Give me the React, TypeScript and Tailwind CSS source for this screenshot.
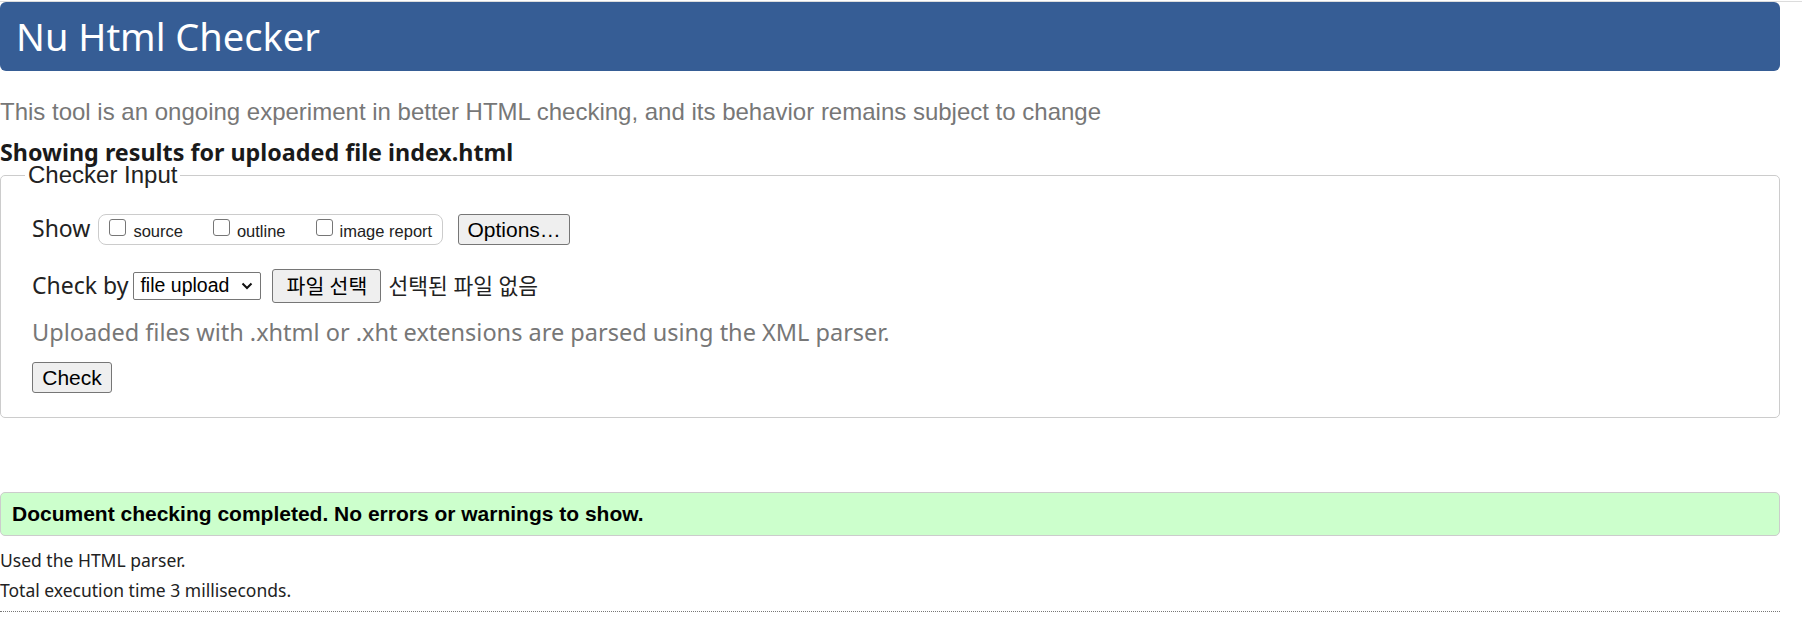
import React from "react";

const ARIAL = "font-['Liberation_Sans',Arial,sans-serif]";
const MALGUN = "font-['Noto_Sans','Noto_Sans_CJK_KR',sans-serif]";

function Box({ label, last }: { label: string; last?: boolean }) {
  return (
    <span className={`inline-flex items-center ${last ? "" : "mr-[30px]"}`}>
      <span className="inline-block w-[17px] h-[17px] border border-[#767676] rounded-[3px] bg-white mr-[7px] -translate-y-[2px]" />
      <span className={`${ARIAL} text-[16.5px] leading-none text-[#222] translate-y-[2px]`}>{label}</span>
    </span>
  );
}

export default function App() {
  return (
    <div className="w-full bg-white text-[#222] min-h-[624px]">
      <div className="pt-px">
        <div className="h-px bg-[#dcdcdc]" />
      </div>
      <div className="mr-[22px]">
        <div className="h-[69px] bg-[#365d95] rounded-[6px] flex items-center pl-[16px]">
          <span className={`${MALGUN} text-white text-[38px] leading-none -translate-y-[1px]`}>Nu Html Checker</span>
        </div>

        <p className={`${ARIAL} text-[#777] text-[24px] leading-none mt-[29px]`}>
          This tool is an ongoing experiment in better HTML checking, and its behavior remains subject to change
        </p>
        <h2 className={`${MALGUN} font-bold text-[23.3px] leading-[20px] mt-[18px] text-[#1a1a1a]`}>
          Showing results for uploaded file index.html
        </h2>

        <fieldset className="border border-[#cccccc] rounded-[5px] pb-[24px] mt-[4px]">
          <legend className={`${ARIAL} ml-[24px] px-[3px] text-[24px] leading-[18px] text-[#222]`}>Checker Input</legend>
          <div className="pl-[31px] pt-[29px]">
            <div className="flex items-center h-[32px]">
              <span className={`${MALGUN} text-[23px] leading-none mr-[8px] -translate-y-[1px]`}>Show</span>
              <span className="inline-flex items-center h-[31px] pl-[10px] pr-[10px] border border-[#cccccc] rounded-[8px]">
                <Box label="source" />
                <Box label="outline" />
                <Box label="image report" last />
              </span>
              <button className={`${ARIAL} ml-[15px] h-[31px] w-[112px] text-[21px] leading-none bg-[#efefef] border border-[#767676] rounded-[3px] text-black`}>
                Options…
              </button>
            </div>

            <div className="flex items-center mt-[24px] h-[34px]">
              <span className={`${MALGUN} text-[23px] leading-none mr-[5px] -translate-y-[1px]`}>Check by</span>
              <span className={`${ARIAL} inline-flex items-center justify-between w-[128px] h-[28px] pl-[6px] pr-[7px] border border-[#767676] rounded-[2px] text-[19.5px] leading-none text-black`}>
                file upload
                <svg width="12" height="8" viewBox="0 0 12 8" fill="none" stroke="#111" strokeWidth="2">
                  <path d="M1.5 1.5 L6 6 L10.5 1.5" />
                </svg>
              </span>
              <button className={`${MALGUN} ml-[11px] h-[34px] w-[109px] text-[20.5px] leading-none bg-[#efefef] border border-[#767676] rounded-[3px] text-black`}>
                파일 선택
              </button>
              <span className={`${MALGUN} ml-[7px] text-[21.5px] leading-none`}>선택된 파일 없음</span>
            </div>

            <p className={`${MALGUN} text-[#777] text-[23.5px] leading-none mt-[18px]`}>
              Uploaded files with .xhtml or .xht extensions are parsed using the XML parser.
            </p>

            <button className={`${ARIAL} mt-[17px] h-[31px] w-[80px] text-[21px] leading-none bg-[#efefef] border border-[#767676] rounded-[3px] text-black`}>
              Check
            </button>
          </div>
        </fieldset>

        <div className="mt-[74px] h-[44px] bg-[#ccffcc] border border-[#cccccc] rounded-[5px] flex items-center pl-[11px]">
          <span className={`${ARIAL} font-bold text-[21px] leading-none text-black`}>
            Document checking completed. No errors or warnings to show.
          </span>
        </div>

        <p className={`${MALGUN} text-[17.5px] leading-none mt-[16px] text-[#222]`}>Used the HTML parser.</p>
        <p className={`${MALGUN} text-[17.5px] leading-none mt-[13px] text-[#222]`}>Total execution time 3 milliseconds.</p>
        <div className="mt-[11px] border-t border-dotted border-[#777]" />
      </div>
    </div>
  );
}
